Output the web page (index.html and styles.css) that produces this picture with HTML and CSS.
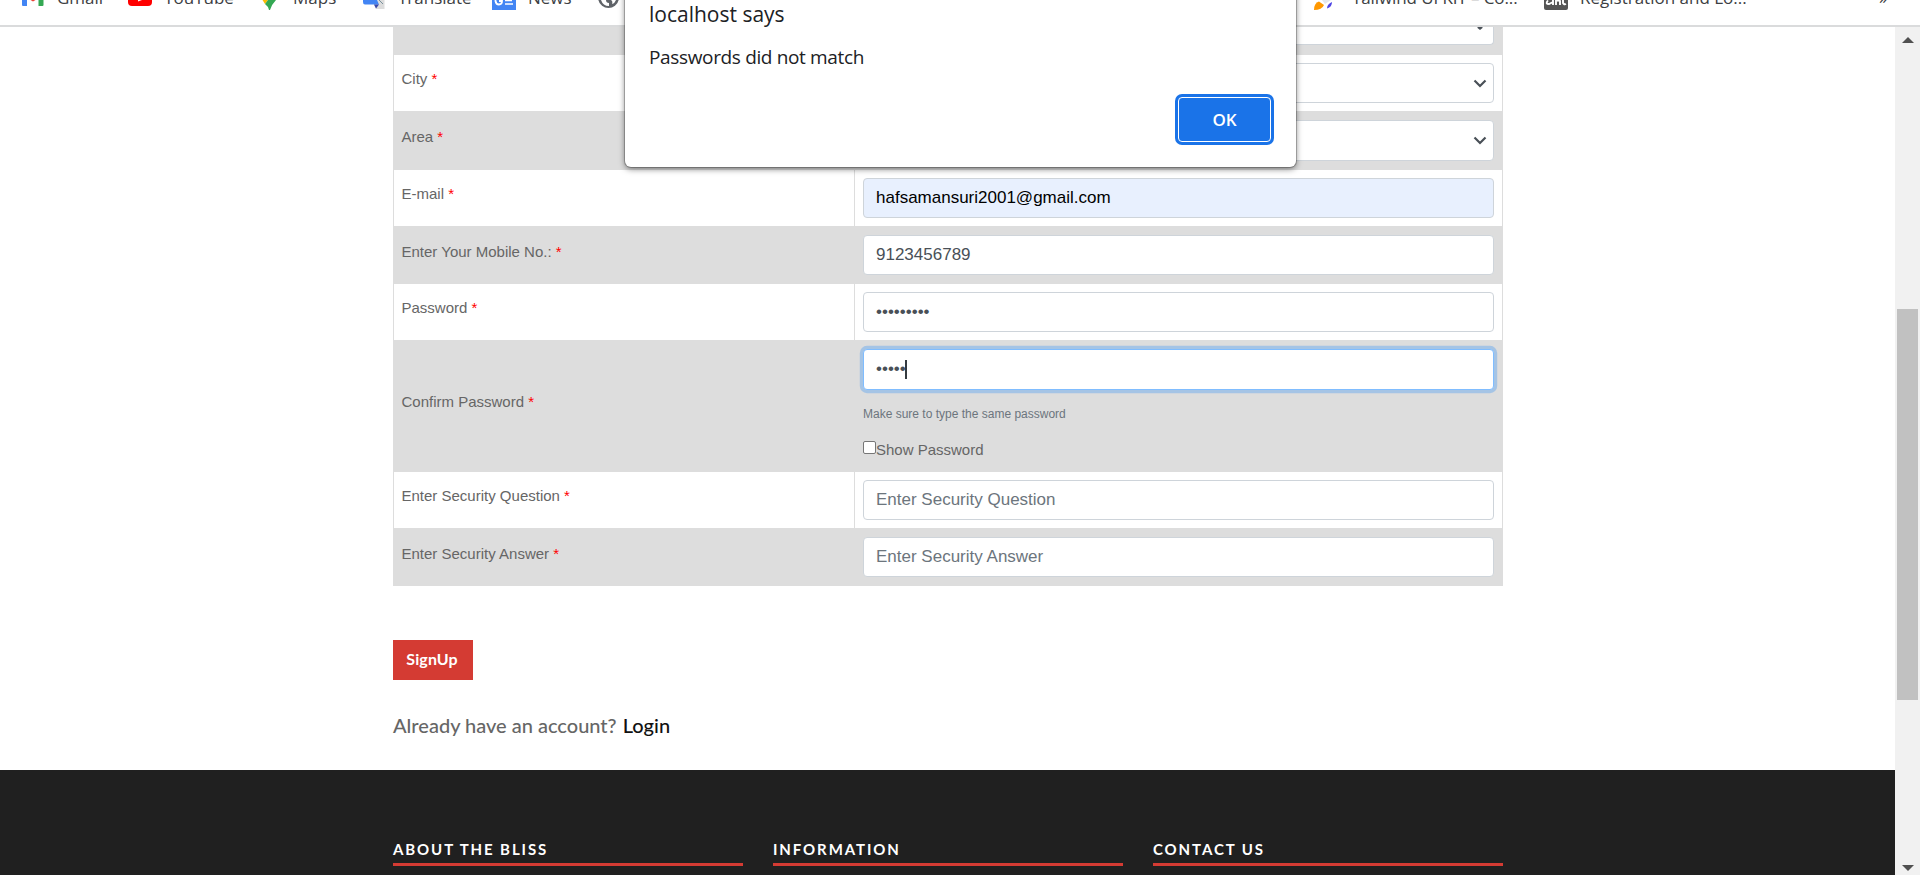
FILE: index.html
```html
<!DOCTYPE html>
<html lang="en">
<head>
<meta charset="utf-8">
<title>Sign up</title>
<link rel="stylesheet" href="styles.css">
</head>
<body>
<nav class="bookmarks">
  <div class="bm bm-gmail"><svg class="ico" viewBox="0 0 24 12"><path d="M1 0h5v6H2q-1 0-1-1z" fill="#4285f4"/><path d="M17.500 0h5v5q0 1-1 1h-4z" fill="#34a853"/><path d="M9.500 0h5L12 1.500z" fill="#ea4335"/></svg><span class="bm-text">Gmail</span></div>
  <div class="bm bm-youtube"><svg class="ico" viewBox="0 0 24 12"><path d="M0 0h24v2q0 4-4 4H4Q0 6 0 2z" fill="#f00"/><path d="M10 0h4l-4 1.500z" fill="#fff"/></svg><span class="bm-text">YouTube</span></div>
  <div class="bm bm-maps"><svg class="ico" viewBox="0 0 24 12"><path d="M5.500 0H11L8 4z" fill="#fbbc04"/><path d="M11 0h8q-4 4-6 10h-1Q11 6 8 4z" fill="#34a853"/></svg><span class="bm-text">Maps</span></div>
  <div class="bm bm-translate"><svg class="ico" viewBox="0 0 24 12"><path d="M10 0h12.500v9H14z" fill="#dcdcdc"/><path d="M1 0h14l2 4.500H3Q1 4.500 1 2z" fill="#4285f4"/><path d="M12 4.500h5L14 8.500z" fill="#3949ab"/><path d="M17 0l4 4" stroke="#78909c" fill="none"/></svg><span class="bm-text">Translate</span></div>
  <div class="bm bm-news"><svg class="ico" viewBox="0 0 24 12"><path d="M0 0h24v10H0z" fill="#4285f4"/><path d="M13 .5h7M13 4h8" stroke="#fff" stroke-width="1.600"/><path d="M3.500 0v1q.5 3.500 3.500 3.500T10 1H7" stroke="#fff" stroke-width="1.800" fill="none"/></svg><span class="bm-text">News</span></div>
  <div class="bm bm-globe"><svg class="ico" viewBox="0 0 24 12"><path d="M.3 0a10.500 10.500 0 0 0 20.400 0z" fill="#5f6368"/><path d="M3 0h5q0 3 3 3v3Q5 6 3 0zM13 0h5q-1 3-4 4 1-3-1-4z" fill="#fff"/></svg></div>
  <div class="bm bm-tailwind"><svg class="ico" viewBox="0 0 24 12"><path d="M2 10Q2 3 7 1.500L12 5q-2 5-10 5z" fill="#ff9800"/><path d="M15 8.500Q15 4 20 2q0 5-5 6.500z" fill="#4f46e5"/><path d="M10 0h9l-6 4z" fill="#e4e7ec"/></svg><span class="bm-text t-tailwind">Tailwind UI KIT – Co...</span></div>
  <div class="bm bm-reg"><svg class="ico" viewBox="0 0 24 12"><path d="M0 0h24v8q0 2-2 2H2Q0 10 0 8z" fill="#555"/><path d="M9 0v5M4 .5Q1 4 5 4l4-2M12 5V0M16 5V1q-1-1-3 0M19 0v3q1 2 3 1" stroke="#fff" stroke-width="1.900" fill="none"/></svg><span class="bm-text">Registration and Lo...</span></div>
  <div class="bm bm-more"><span class="bm-text">»</span></div>
</nav>
<div class="viewport">
  <div class="page">
    <main class="container">
      <div class="form-table">
        <div class="row row-top shade"><div class="label"></div><div class="cell"><div class="input select"><svg class="chev" viewBox="0 0 14 9"><path d="M4.500 0h5v1L7 3 4.500 1z" fill="#495057"/></svg></div></div></div>
        <div class="row"><div class="label">City <b class="req">*</b></div><div class="cell"><div class="input select"><svg class="chev" viewBox="0 0 14 9"><path d="M1.500 1.500L7 7l5.500-5.500" fill="none" stroke="#495057" stroke-width="2.200"/></svg></div></div></div>
        <div class="row shade row-area"><div class="label">Area <b class="req">*</b></div><div class="cell"><div class="input select"><svg class="chev" viewBox="0 0 14 9"><path d="M1.500 1.500L7 7l5.500-5.500" fill="none" stroke="#495057" stroke-width="2.200"/></svg></div></div></div>
        <div class="row"><div class="label">E-mail <b class="req">*</b></div><div class="cell"><div class="input autofill">hafsamansuri2001@gmail.com</div></div></div>
        <div class="row shade"><div class="label">Enter Your Mobile No.: <b class="req">*</b></div><div class="cell"><div class="input">9123456789</div></div></div>
        <div class="row"><div class="label">Password <b class="req">*</b></div><div class="cell"><div class="input dots">•••••••••</div></div></div>
        <div class="row shade row-confirm"><div class="label">Confirm Password <b class="req">*</b></div><div class="cell"><div class="input dots focus">•••••<i class="caret"></i></div><p class="hint">Make sure to type the same password</p><label class="show"><span class="box"></span>Show Password</label></div></div>
        <div class="row"><div class="label">Enter Security Question <b class="req">*</b></div><div class="cell"><div class="input placeholder">Enter Security Question</div></div></div>
        <div class="row shade"><div class="label">Enter Security Answer <b class="req">*</b></div><div class="cell"><div class="input placeholder">Enter Security Answer</div></div></div>
      </div>
      <button class="signup">SignUp</button>
      <p class="account">Already have an account? <a class="login">Login</a></p>
    </main>
    <footer class="footer">
      <h4 class="foot-title">ABOUT THE BLISS</h4>
      <h4 class="foot-title">INFORMATION</h4>
      <h4 class="foot-title">CONTACT US</h4>
    </footer>
  </div>
  <div class="scrollbar">
    <svg class="arrow" viewBox="0 0 12 6"><path d="M0 6L6 0l6 6z" fill="#505050"/></svg>
    <div class="thumb"></div>
    <svg class="arrow" viewBox="0 0 12 6"><path d="M0 0h12L6 6z" fill="#505050"/></svg>
  </div>
</div>
<div class="dialog">
  <div class="dialog-title">localhost says</div>
  <div class="dialog-msg">Passwords did not match</div>
  <button class="ok">OK</button>
</div>
</body>
</html>
```
FILE: styles.css
```css
* { box-sizing: border-box; }
body { margin: 0; height: 875px; overflow: hidden; position: relative; background: #fff; font-family: "Liberation Sans", Arial, sans-serif; color: #666; display: flex; flex-direction: column; }

.bookmarks { height: 27px; flex: none; border-bottom: 2px solid #dadbdc; position: relative; overflow: hidden; }
.bm { position: absolute; top: 0; display: flex; }
.ico { width: 24px; height: 12px; flex: none; display: block; }
.bm-text { font: 17px/24px "Open Sans", "Noto Sans", sans-serif; color: #3c4043; white-space: nowrap; margin-top: -14px; margin-left: 12px; }
.bm-gmail { left: 21px; }
.bm-youtube { left: 128px; }
.bm-maps { left: 257px; }
.bm-translate { left: 362px; }
.bm-news { left: 492px; }
.bm-globe { left: 598px; }
.bm-tailwind { left: 1312px; }
.t-tailwind { margin-left: 16px; letter-spacing: -.1px; }
.bm-reg { left: 1544px; }
.bm-more { left: 1867px; }

.viewport { flex: 1; min-height: 0; display: flex; }
.page { width: 1895px; display: flex; flex-direction: column; }
.container { width: 1110px; height: 743px; flex: none; margin-left: 393px; display: flex; flex-direction: column; align-items: flex-start; }
.form-table { width: 1110px; border: solid #ddd; border-width: 0 1px; font-size: 15px; }
.row { display: flex; height: 56px; background: #fff; }
.shade { height: 58px; background: #ddd; }
.label { width: 461px; flex: none; border-right: 1px solid #ddd; padding: 15px 8px 0 7.500px; line-height: 18px; white-space: nowrap; }
.shade .label { padding-top: 16.500px; }
.row-confirm .label { padding-top: 53px; }
.req { color: #f00; font-weight: 400; }
.cell { flex: 1; padding: 8px 8px 0; }
.shade .cell { padding-top: 9px; }
.input { width: 631px; height: 40px; border: 1px solid #ced4da; border-radius: 4px; background: #fff; color: #495057; font-size: 17px; line-height: 37px; padding-left: 12px; white-space: nowrap; }
.select { display: flex; justify-content: flex-end; align-items: center; padding-right: 6px; }
.chev { width: 14px; height: 9px; }
.autofill { background: #e8f0fe; color: #000; }
.placeholder { color: #6c757d; }
.dots { display: flex; align-items: center; line-height: 36px; padding-bottom: 1px; }

.row-area { height: 59px; }
.row-area .input { height: 41px; }
.row-top { height: 28px; }
.row-top .cell { padding-top: 0; }
.row-top .input { height: 18px; border-top: 0; border-radius: 0 0 4px 4px; align-items: flex-start; }
.row-confirm { height: 132px; }
.focus { height: 41px; border-color: #80bdff; box-shadow: 0 0 0 3.200px rgba(0, 123, 255, .25); }
.caret { width: 2px; height: 19px; background: #343a40; margin-left: -1px; }
.hint { margin: 17px 0 0; font-size: 12px; line-height: 15px; color: #6c757d; }
.show { display: flex; align-items: flex-start; margin-top: 19px; line-height: 17px; }
.box { width: 13px; height: 13px; border: 1px solid #767676; border-radius: 2px; background: #fff; }

.signup { margin: 54px 0 0; width: 80px; height: 40px; flex: none; border: 0; padding: 0 2px 2px 0; background: #d43b33; color: #fff; font: 700 16px/38px Lato, sans-serif; letter-spacing: .1px; }
.account { margin: 31px 0 0; font: 500 20px/28px Lato, sans-serif; white-space: nowrap; }
.login { color: #111; margin-left: 1px; }
.footer { flex: 1; background: #202020; padding: 70px 0 0 393px; display: flex; gap: 30px; }
.foot-title { margin: 0; width: 350px; height: 26px; border-bottom: 3px solid #d43b33; color: #fff; font: 700 15px/18px Lato, sans-serif; letter-spacing: 1.900px; white-space: nowrap; }

.scrollbar { width: 25px; flex: none; background: #f1f1f1; display: flex; flex-direction: column; align-items: center; padding: 10px 0 4px; }
.arrow { width: 12px; height: 6px; flex: none; }
.thumb { width: 21px; height: 391px; background: #c1c1c1; margin: 266px 0 auto; }

.dialog { position: absolute; left: 625px; top: -20px; width: 671px; height: 187px; background: #fff; border-radius: 0 0 6px 6px; box-shadow: 0 0 0 1px rgba(0, 0, 0, .22), 0 2px 6px rgba(0, 0, 0, .5); padding: 20px 25px 0 24px; display: flex; flex-direction: column; font: 19px/28px "Open Sans", "Noto Sans", sans-serif; color: #202124; white-space: nowrap; }
.dialog-title { font-size: 21px; }
.dialog-msg { margin-top: 15px; letter-spacing: -.35px; }
.ok { align-self: flex-end; margin-top: 26px; width: 93px; height: 45px; border: 1px solid #fff; border-radius: 4px; background: #1a73e8; box-shadow: 0 0 0 3px #1a73e8; color: #fff; font: 600 17px/40px "Open Sans", "Noto Sans", sans-serif; padding: 0; }
```
